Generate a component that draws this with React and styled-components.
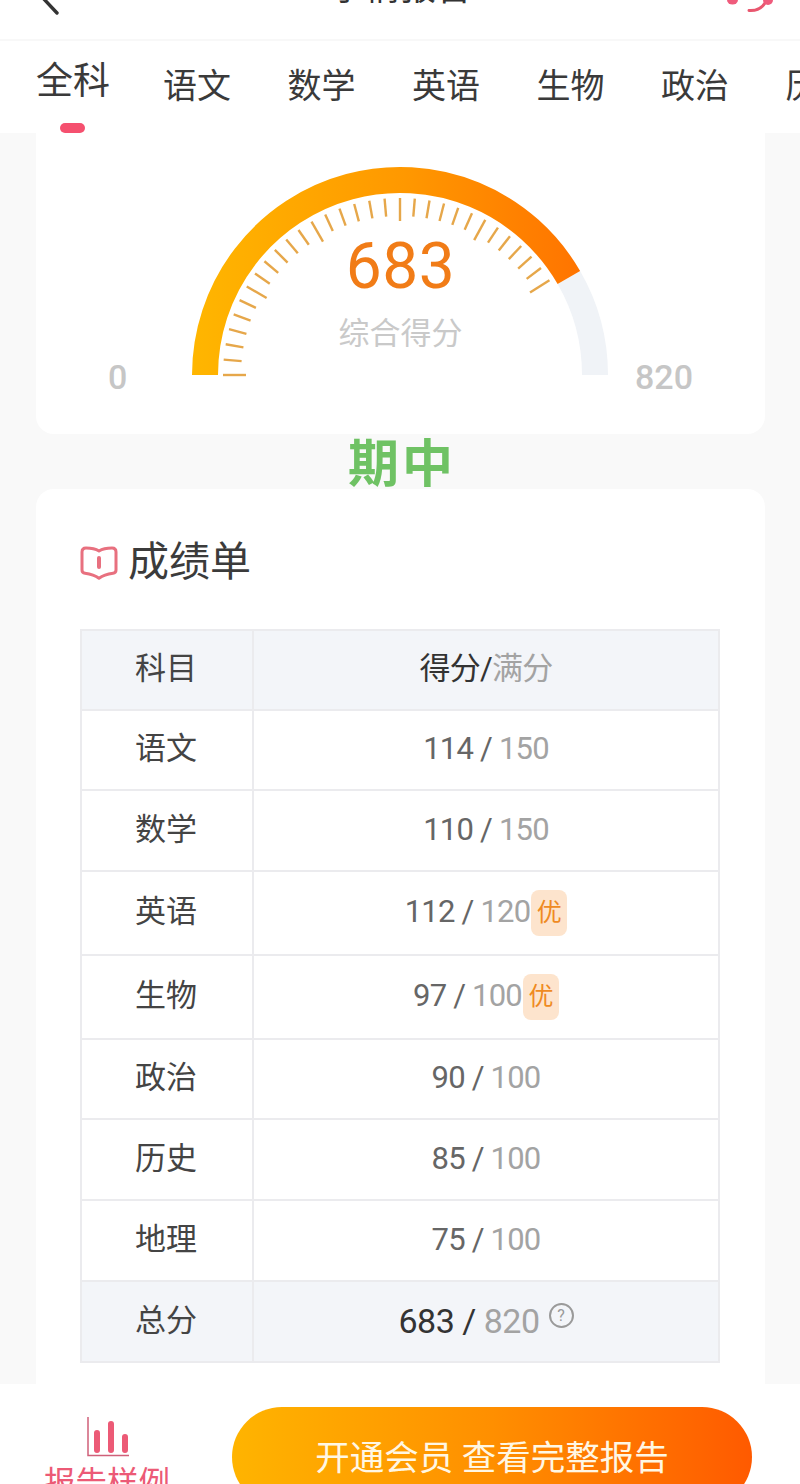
import React from "react";
import styled, { createGlobalStyle } from "styled-components";

const Global = createGlobalStyle`
  html, body { margin: 0; padding: 0; background: #f9f9f9; }
  * { box-sizing: border-box; }
`;
const Page = styled.div`
  width: 800px; height: 1484px; overflow: hidden; display: flex; flex-direction: column;
  background: #f9f9f9; font-family: Roboto, "Noto Sans CJK SC", sans-serif; color: #333;
`;
const Header = styled.header`
  flex: none; height: 41px; background: #fff; border-bottom: 2px solid #f8f8f8; overflow: hidden;
  display: grid; grid-template-columns: 1fr auto 1fr; align-items: start; padding: 0 24px;
`;
const Title = styled.div`
  font-size: 35px; line-height: 40px; margin: -31px 0 0 2px; color: #333; letter-spacing: 0.5px;
`;
const HeadIcon = styled.svg`
  display: block; justify-self: ${p => p.$end ? "end" : "start"};
  margin-left: ${p => p.$end ? "0" : "14px"};
`;
const Tabs = styled.nav`
  flex: none; height: 92px; background: #fff; display: flex; overflow: hidden; padding-left: 36px;
`;
const Tab = styled.div`
  position: relative; flex: none; width: ${p => p.$active ? "127px" : "124.5px"};
  font-size: ${p => p.$active ? "37px" : "34px"}; line-height: 40px;
  padding-top: ${p => p.$active ? "21px" : "25px"}; color: #3a3a3a; white-space: nowrap;
`;
const Indicator = styled.span`
  position: absolute; left: 24px; bottom: 0; width: 25px; height: 10px;
  border-radius: 5px; background: #f5506f;
`;
const Content = styled.main`
  flex: 1; min-height: 0; overflow: hidden; padding: 0 35px 0 36px; display: flex; flex-direction: column;
`;
const GaugeCard = styled.section`
  flex: none; height: 301px; background: #fff; border-radius: 0 0 18px 18px; padding: 34px 72px 0;
  display: flex; justify-content: space-between; align-items: flex-start; position: relative;
`;
const GaugeEnd = styled.span`
  font-size: 34px; font-weight: 500; line-height: 40px; color: #c6c6c6; margin-top: 190px;
`;
const GaugeCenter = styled.div`
  position: absolute; left: 0; right: 0; top: 99px; display: flex; flex-direction: column; align-items: center;
`;
const Score = styled.div`
  font-size: 64px; line-height: 70px; color: #f17c17; letter-spacing: 0.5px;
`;
const ScoreLabel = styled.div`
  font-size: 31px; line-height: 40px; margin-top: 12px; color: #c9c9c9;
`;
const GaugeSvg = styled.svg`
  position: absolute; left: 156px; top: 34px;
`;
const Period = styled.div`
  flex: none; height: 55px; display: flex; align-items: center; justify-content: center; padding: 6px 0 0 3px;
  font-size: 51px; font-weight: 700; line-height: 49px; color: #6fc264; letter-spacing: 3px;
`;
const ReportCard = styled.section`
  flex: 1; min-height: 0; background: #fff; border-radius: 18px 18px 0 0; padding: 50px 44px 0;
`;
const CardTitle = styled.h2`
  margin: 0 0 43px; display: flex; align-items: center; gap: 10px; height: 47px;
  font-size: 41px; line-height: 47px; font-weight: 400; color: #3b3b3b; padding-top: 0;
`;
const Table = styled.table`
  width: 640px; border-collapse: collapse; table-layout: fixed; font-size: 31px;
`;
const Row = styled.tr`
  height: ${p => p.$h}px; background: ${p => p.$shade ? "#f3f5f9" : "#fff"};
`;
const SubjectCell = styled.td`
  width: 172px; border: 2px solid #ebebee; text-align: center; padding: 0 2px 2px 0; color: #444;
  line-height: 40px;
`;
const ScoreCell = styled.td`
  border: 2px solid #ebebee; text-align: center; padding: 0 0 2px;
`;
const ScoreLine = styled.div`
  display: flex; align-items: center; justify-content: center; white-space: pre;
  font-size: ${p => p.$large ? "34px" : "31px"}; line-height: 40px;
  letter-spacing: ${p => p.$large ? "-0.5px" : "-0.8px"};
`;
const Got = styled.span`
  color: ${p => p.$dark ? "#333" : "#666"};
`;
const Full = styled.span`
  color: #a3a3a3;
`;
const Badge = styled.span`
  width: 36px; height: 46px; margin: 2px 0 0 1px; border-radius: 8px; background: #fde4cd; color: #ef8a22;
  font-size: 25px; line-height: 46px; text-align: center; letter-spacing: 0;
`;
const Help = styled.span`
  width: 25px; height: 25px; margin: -10px 0 0 9px; border: 2px solid #9a9a9a; border-radius: 50%;
  font-size: 16px; line-height: 21px; text-align: center; color: #9a9a9a; letter-spacing: 0;
`;
const BottomBar = styled.footer`
  flex: none; height: 100px; background: #fff; overflow: hidden; display: flex; align-items: flex-start;
  padding: 23px 48px 0 44px;
`;
const SampleLink = styled.div`
  width: 188px; flex: none; display: flex; flex-direction: column; align-items: flex-start; color: #ec5a76;
  margin-top: 9px;
`;
const SampleText = styled.div`
  font-size: 31.5px; line-height: 40px; margin-top: 6px; white-space: nowrap;
`;
const BarsIcon = styled.svg`
  display: block; margin-left: 42px;
`;
const Cta = styled.button`
  flex: none; width: 520px; height: 100px; border: 0; border-radius: 50px; padding: 2px 0 0;
  background: linear-gradient(90deg, #ffb400 0%, #ff8f00 50%, #ff5a00 100%);
  color: #fff7e4; font: inherit; font-size: 34.5px; line-height: 98px; text-align: center; white-space: pre;
`;

const CX = 208, CY = 208, R = 195;
const pt = (deg, r) => [CX + r * Math.cos(deg * Math.PI / 180), CY - r * Math.sin(deg * Math.PI / 180)];
const arc = (from, to) => {
  const [x1, y1] = pt(from, R);
  const [x2, y2] = pt(to, R);
  return `M${x1.toFixed(2)} ${y1.toFixed(2)}A${R} ${R} 0 0 1 ${x2.toFixed(2)} ${y2.toFixed(2)}`;
};
const ticks = Array.from({ length: 31 }, (_, i) => {
  const deg = i <= 18 ? 180 - i * 5 : 90 - (i - 18) * 4.8;
  const long = i % 6 === 0;
  const [x1, y1] = pt(deg, 177);
  const [x2, y2] = pt(deg, long ? 154 : 159);
  return { x1, y1, x2, y2, key: i };
});

const Gauge = () => (
  <GaugeSvg width="416" height="210" viewBox="0 0 416 210">
    <defs>
      <linearGradient id="g" gradientUnits="userSpaceOnUse" x1="0" y1="0" x2="388" y2="0">
        <stop offset="0" stopColor="#ffb600" />
        <stop offset="0.55" stopColor="#ff9800" />
        <stop offset="1" stopColor="#ff7400" />
      </linearGradient>
    </defs>
    <path d={arc(30, 0)} fill="none" stroke="#f0f3f7" strokeWidth="26" />
    <path d={arc(180, 30)} fill="none" stroke="url(#g)" strokeWidth="26" />
    {ticks.map(t => (
      <line key={t.key} x1={t.x1} y1={t.y1} x2={t.x2} y2={t.y2} stroke="#e6a74a" strokeWidth="2.4" />
    ))}
  </GaugeSvg>
);

const BookIcon = () => (
  <svg width="38" height="36" viewBox="0 0 38 36" fill="none">
    <path d="M2 7c0-2.500 1.500-4 4-4 4.500 0 9 .5 13 3 4-2.500 8.500-3 13-3 2.500 0 4 1.500 4 4v18c0 2-1 3-3 3.200-4 .5-10 2-14 5-4-3-10-4.500-14-5-2-.2-3-1.200-3-3.200z"
      stroke="#e8707f" strokeWidth="3" strokeLinejoin="round" />
    <path d="M19 13v9" stroke="#e8707f" strokeWidth="4" strokeLinecap="round" />
  </svg>
);

const rows = [
  ["语文", "114", "150", 80],
  ["数学", "110", "150", 81],
  ["英语", "112", "120", 84, true],
  ["生物", "97", "100", 84, true],
  ["政治", "90", "100", 80],
  ["历史", "85", "100", 81],
  ["地理", "75", "100", 81],
];

export default function App() {
  return (
    <Page>
      <Global />
      <Header>
        <HeadIcon width="24" height="16" viewBox="0 0 24 16" fill="none">
          <path d="M4 -3 L19 13" stroke="#333" strokeWidth="3.4" strokeLinecap="round" />
        </HeadIcon>
        <Title>学情报告</Title>
        <HeadIcon $end width="52" height="18" viewBox="0 0 52 18" fill="none">
          <ellipse cx="8.500" cy="0" rx="5.500" ry="4.500" fill="#ef5b7c" />
          <path d="M25 10.500C33 11 38 8 41 3" stroke="#e9576f" strokeWidth="3" strokeLinecap="round" />
          <circle cx="44" cy="0" r="5" fill="#ef5b7c" />
        </HeadIcon>
      </Header>
      <Tabs>
        <Tab $active>全科<Indicator /></Tab>
        <Tab>语文</Tab>
        <Tab>数学</Tab>
        <Tab>英语</Tab>
        <Tab>生物</Tab>
        <Tab>政治</Tab>
        <Tab>历史</Tab>
      </Tabs>
      <Content>
        <GaugeCard>
          <Gauge />
          <GaugeEnd>0</GaugeEnd>
          <GaugeCenter>
            <Score>683</Score>
            <ScoreLabel>综合得分</ScoreLabel>
          </GaugeCenter>
          <GaugeEnd>820</GaugeEnd>
        </GaugeCard>
        <Period>期中</Period>
        <ReportCard>
          <CardTitle><BookIcon />成绩单</CardTitle>
          <Table>
            <tbody>
              <Row $h={80} $shade>
                <SubjectCell>科目</SubjectCell>
                <ScoreCell><ScoreLine><Got $dark>得分/</Got><Full>满分</Full></ScoreLine></ScoreCell>
              </Row>
              {rows.map(([name, got, full, h, top]) => (
                <Row $h={h} key={name}>
                  <SubjectCell>{name}</SubjectCell>
                  <ScoreCell>
                    <ScoreLine>
                      <Got>{got} / </Got><Full>{full}</Full>
                      {top && <Badge>优</Badge>}
                    </ScoreLine>
                  </ScoreCell>
                </Row>
              ))}
              <Row $h={81} $shade>
                <SubjectCell>总分</SubjectCell>
                <ScoreCell>
                  <ScoreLine $large><Got $dark>683 / </Got><Full>820</Full><Help>?</Help></ScoreLine>
                </ScoreCell>
              </Row>
            </tbody>
          </Table>
        </ReportCard>
      </Content>
      <BottomBar>
        <SampleLink>
          <BarsIcon width="44" height="42" viewBox="0 0 44 42" fill="none">
            <path d="M2 1v38.500h41" stroke="#cf6079" strokeWidth="1.500" />
            <path d="M11 17v17M25 8v26M39 21v13" stroke="#ec5a76" strokeWidth="6" strokeLinecap="round" />
          </BarsIcon>
          <SampleText>报告样例</SampleText>
        </SampleLink>
        <Cta>开通会员 查看完整报告</Cta>
      </BottomBar>
    </Page>
  );
}
